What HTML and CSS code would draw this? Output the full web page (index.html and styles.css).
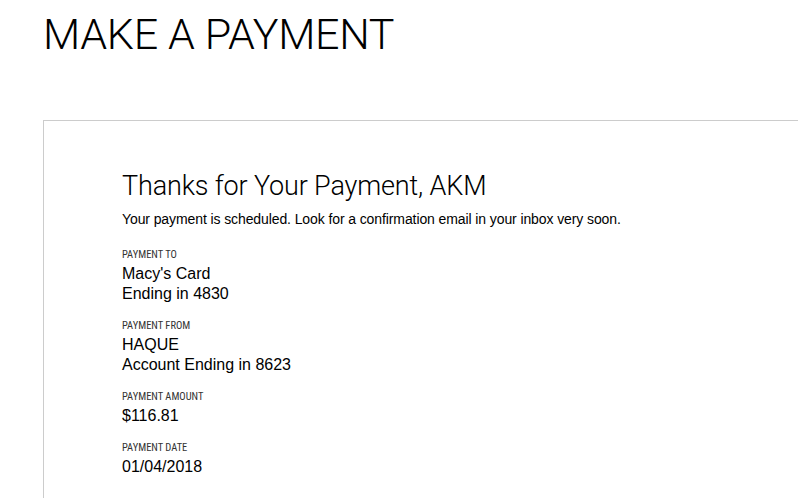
FILE: index.html
```html
<!DOCTYPE html>
<html>
<head>
<meta charset="utf-8">
<link rel="stylesheet" href="styles.css">
</head>
<body>
<div class="page">
  <h1 class="page-title">MAKE A PAYMENT</h1>
  <section class="card">
    <h2 class="thanks">Thanks for Your Payment, AKM</h2>
    <p class="note">Your payment is scheduled. Look for a confirmation email in your inbox very soon.</p>
    <div class="field">
      <div class="label">PAYMENT TO</div>
      <div class="value">Macy's Card<br>Ending in 4830</div>
    </div>
    <div class="field">
      <div class="label">PAYMENT FROM</div>
      <div class="value">HAQUE<br>Account Ending in 8623</div>
    </div>
    <div class="field">
      <div class="label">PAYMENT AMOUNT</div>
      <div class="value">$116.81</div>
    </div>
    <div class="field">
      <div class="label">PAYMENT DATE</div>
      <div class="value">01/04/2018</div>
    </div>
  </section>
</div>
</body>
</html>
```

FILE: styles.css
```css
html, body {
  margin: 0;
  padding: 0;
  background: #fff;
}
body {
  font-family: "Liberation Sans", Arial, sans-serif;
  color: #000;
}
.page {
  padding-left: 43px;
  height: 498px;
  overflow: hidden;
}
.page-title {
  margin: 0;
  padding-top: 9px;
  font-family: Roboto, "Liberation Sans", sans-serif;
  font-weight: 300;
  font-size: 43px;
  line-height: 50px;
  letter-spacing: -0.3px;
  color: #000;
}
.card {
  margin-top: 61px;
  border-top: 1px solid #cccccc;
  border-left: 1px solid #cccccc;
  padding: 48px 0 0 78px;
  height: 400px;
}
.thanks {
  margin: 0;
  font-family: Roboto, "Liberation Sans", sans-serif;
  font-weight: 300;
  font-size: 27px;
  line-height: 34px;
  letter-spacing: -0.15px;
}
.note {
  margin: 7px 0 20px;
  font-size: 14px;
  line-height: 18px;
  letter-spacing: -0.1px;
}
.field {
  margin-top: 15px;
}
.label {
  font-family: "Liberation Sans Narrow", "Roboto Condensed", "Liberation Sans", sans-serif;
  font-stretch: condensed;
  font-size: 10.5px;
  line-height: 14px;
  color: #333;
}
.value {
  margin-top: 2px;
  font-size: 16px;
  line-height: 20px;
}
```
